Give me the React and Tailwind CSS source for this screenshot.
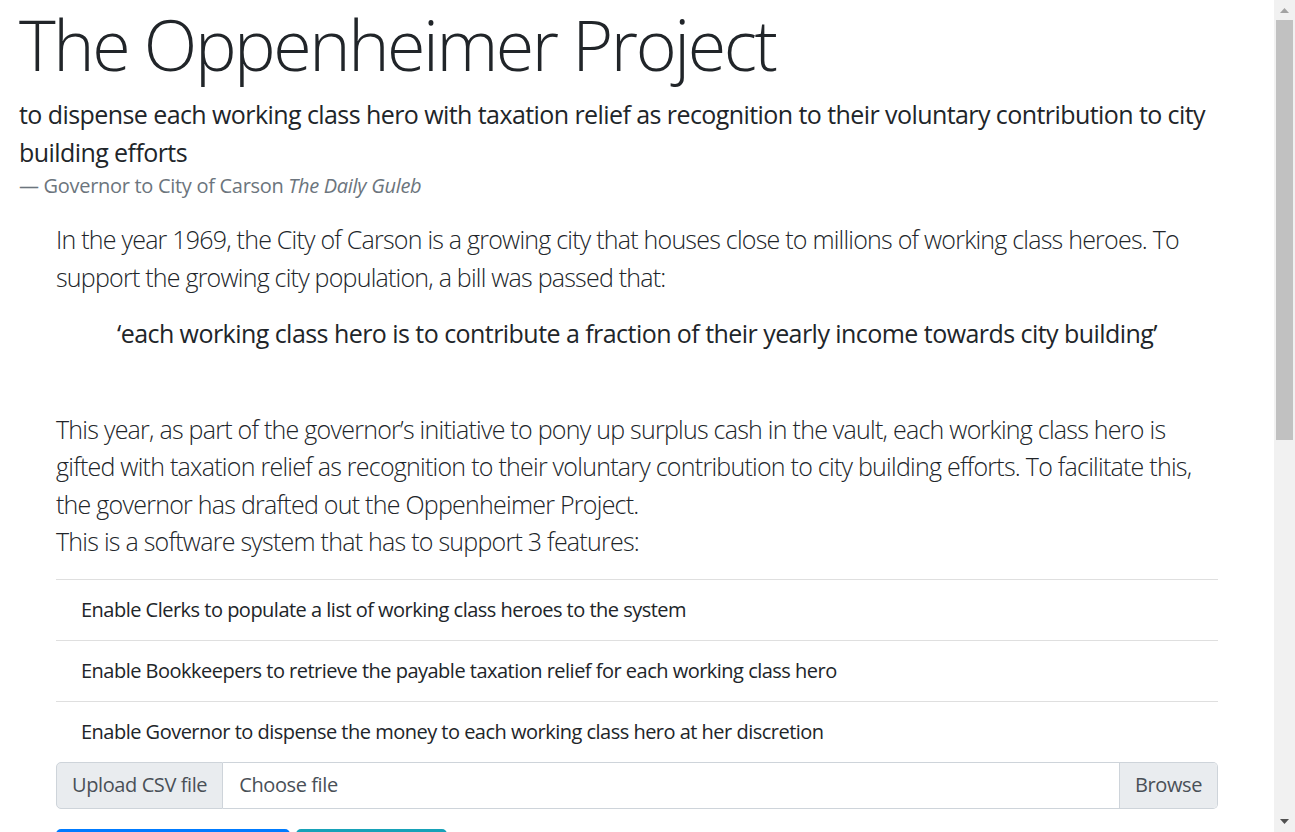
import React from 'react';

const features = [
    'Enable Clerks to populate a list of working class heroes to the system',
    'Enable Bookkeepers to retrieve the payable taxation relief for each working class hero',
    'Enable Governor to dispense the money to each working class hero at her discretion',
];

function Arrow({ up, color }) {
    return (
        <svg width="9" height="5" viewBox="0 0 9 5">
            <polygon points={up ? '4.5,0 9,5 0,5' : '0,0 9,0 4.5,5'} fill={color} />
        </svg>
    );
}

export default function App() {
    return (
        <div className="flex h-screen bg-white text-[#212529] font-['Segoe_UI','Open_Sans',sans-serif]">
            <main className="flex-1 overflow-y-auto [scrollbar-width:none]">
                {/* Heading + quote */}
                <div className="pt-[2px] pl-[19px] pr-[15px]">
                    <h1 className="text-[70px] font-light leading-[1.2] tracking-[-0.035em] mb-[10px]">The Oppenheimer Project</h1>
                    <blockquote className="text-[25px] leading-[1.5] mb-[20px]">
                        <p className="tracking-[-0.023em]">to dispense each working class hero with taxation relief as recognition to their voluntary contribution to city building efforts</p>
                        <footer className="text-[20px] text-[#6c757d] tracking-[-0.015em]">
                            — Governor to City of Carson <cite className="italic">The Daily Guleb</cite>
                        </footer>
                    </blockquote>
                </div>

                {/* Body */}
                <div className="ml-[56px] w-[1162px] pb-[709px]">
                    <p className="text-[25px] font-light leading-[1.5] tracking-[-0.031em] mb-[19px]">
                        In the year 1969, the City of Carson is a growing city that houses close to millions of working class heroes. To support the growing city population, a bill was passed that:
                    </p>
                    <p className="text-[25px] leading-[1.5] tracking-[-0.022em] text-center mb-[58px]">
                        ‘each working class hero is to contribute a fraction of their yearly income towards city building’
                    </p>
                    <p className="text-[25px] font-light leading-[1.5] tracking-[-0.03em] mb-[18px]">
                        This year, as part of the governor’s initiative to pony up surplus cash in the vault, each working class hero is gifted with taxation relief as recognition to their voluntary contribution to city building efforts. To facilitate this, the governor has drafted out the Oppenheimer Project.
                        <br />
                        This is a software system that has to support 3 features:
                    </p>

                    <ul className="tracking-[-0.032em]">
                        {features.map(f => (
                            <li key={f} className="border-t border-[#dfdfdf] px-[25px] py-[15px] text-[20px] leading-[30px]">
                                {f}
                            </li>
                        ))}
                    </ul>

                    {/* File upload */}
                    <div className="flex h-[47px] text-[20px] leading-[30px] tracking-[-0.02em] text-[#495057]">
                        <span className="flex items-center px-[15px] bg-[#e9ecef] border border-[#ced4da] rounded-l-[5px]">Upload CSV file</span>
                        <label className="flex-1 flex items-center border-y border-r border-[#ced4da] rounded-r-[5px] overflow-hidden">
                            <span className="flex-1 px-[16px]">Choose file</span>
                            <span className="h-full flex items-center px-[15px] bg-[#e9ecef] border-l border-[#ced4da]">Browse</span>
                        </label>
                    </div>

                    <div className="flex gap-[6px] mt-[20px]">
                        <button className="w-[234px] h-[47px] rounded-[5px] bg-[#007bff] text-white text-[20px]">Upload heroes</button>
                        <button className="w-[151px] h-[47px] rounded-[5px] bg-[#17a2b8] text-white text-[20px]">View relief</button>
                    </div>
                </div>
            </main>

            {/* Scrollbar */}
            <aside className="w-[21px] flex flex-col bg-[#f1f1f1]">
                <div className="h-[20px] flex items-center justify-center">
                    <Arrow up color="#a3a3a3" />
                </div>
                <div className="flex-1 px-[2px]">
                    <div className="h-[420px] bg-[#c1c1c1]" />
                </div>
                <div className="h-[21px] flex items-center justify-center">
                    <Arrow color="#505050" />
                </div>
            </aside>
        </div>
    );
}
